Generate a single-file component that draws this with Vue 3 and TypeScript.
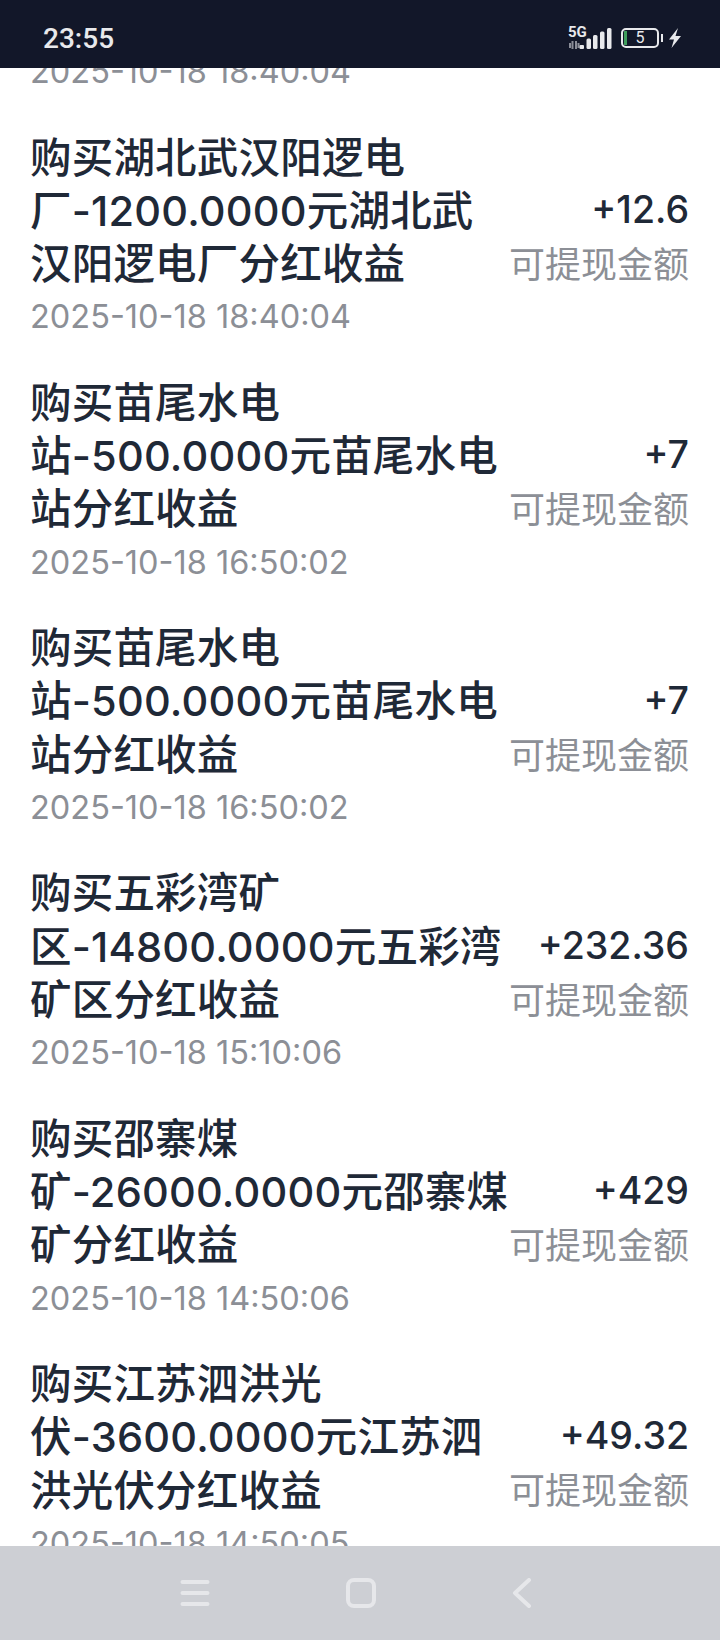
<template>
  <div class="phone">
    <header class="status-bar">
      <span class="clock">23:55</span>
      <div class="status-icons">
        <svg class="network" width="46" height="24" viewBox="0 0 46 24">
          <text x="1" y="11" class="net-label">5G</text>
          <path d="M3 17v5M5.500 15v8M9 15v8M11.500 17v5" class="net-arrows" />
          <rect x="12.500" y="19" width="4.500" height="4" rx="1" class="bar" />
          <rect x="19.500" y="12.500" width="4.500" height="10.500" rx="1.500" class="bar" />
          <rect x="26" y="9" width="4.500" height="14" rx="1.500" class="bar" />
          <rect x="33" y="5.500" width="4.500" height="17.500" rx="1.500" class="bar" />
          <rect x="40" y="2" width="4.500" height="21" rx="1.500" class="bar" />
        </svg>
        <div class="battery">
          <span class="battery-level"></span>
          <span class="battery-num">5</span>
        </div>
        <span class="battery-nub"></span>
        <svg class="bolt" width="14" height="20" viewBox="0 0 14 20">
          <path d="M10 0 1 11.500h5L3.500 20 13 8H7.500z" fill="#e8e9ec" />
        </svg>
      </div>
    </header>

    <main class="viewport">
      <ul class="record-list">
        <li v-for="(item, i) in records" :key="i" class="record">
          <div class="record-main">
            <p class="record-title">
              <span v-for="line in item.lines" :key="line" class="title-line">{{ line }}</span>
            </p>
            <p class="record-time">{{ item.time }}</p>
          </div>
          <div class="record-side">
            <span class="record-amount">{{ item.amount }}</span>
            <span class="record-type">可提现金额</span>
          </div>
        </li>
      </ul>
    </main>

    <footer class="nav-bar">
      <svg width="30" height="28" viewBox="0 0 30 28">
        <path d="M2.500 3h25M2.500 14h25M2.500 25h25" class="nav-icon" />
      </svg>
      <svg width="30" height="30" viewBox="0 0 30 30">
        <rect x="2" y="2" width="26" height="26" rx="6" class="nav-icon" />
      </svg>
      <svg width="20" height="30" viewBox="0 0 20 30">
        <path d="M17 2 3 15l14 13" class="nav-icon" />
      </svg>
    </footer>
  </div>
</template>

<script setup lang="ts">
interface RecordItem {
  lines: string[];
  time: string;
  amount: string;
}

const records: RecordItem[] = [
  {
    lines: ['购买湖北武汉阳逻电', '厂-1200.0000元湖北武', '汉阳逻电厂分红收益'],
    time: '2025-10-18 18:40:04',
    amount: '+12.6',
  },
  {
    lines: ['购买湖北武汉阳逻电', '厂-1200.0000元湖北武', '汉阳逻电厂分红收益'],
    time: '2025-10-18 18:40:04',
    amount: '+12.6',
  },
  {
    lines: ['购买苗尾水电', '站-500.0000元苗尾水电', '站分红收益'],
    time: '2025-10-18 16:50:02',
    amount: '+7',
  },
  {
    lines: ['购买苗尾水电', '站-500.0000元苗尾水电', '站分红收益'],
    time: '2025-10-18 16:50:02',
    amount: '+7',
  },
  {
    lines: ['购买五彩湾矿', '区-14800.0000元五彩湾', '矿区分红收益'],
    time: '2025-10-18 15:10:06',
    amount: '+232.36',
  },
  {
    lines: ['购买邵寨煤', '矿-26000.0000元邵寨煤', '矿分红收益'],
    time: '2025-10-18 14:50:06',
    amount: '+429',
  },
  {
    lines: ['购买江苏泗洪光', '伏-3600.0000元江苏泗', '洪光伏分红收益'],
    time: '2025-10-18 14:50:05',
    amount: '+49.32',
  },
];
</script>

<style>
html,
body {
  margin: 0;
  background: #fff;
}
</style>

<style scoped>
.phone {
  width: 720px;
  height: 1640px;
  display: flex;
  flex-direction: column;
  overflow: hidden;
  font-family: Inter, "Noto Sans CJK SC", sans-serif;
}

.status-bar {
  height: 68px;
  flex: none;
  box-sizing: border-box;
  display: flex;
  align-items: center;
  justify-content: space-between;
  padding: 8px 38px 0 43px;
  background: #121729;
  color: #e8e9ec;
}

.clock {
  font-family: Roboto, sans-serif;
  font-size: 28px;
  font-weight: 500;
}

.status-icons {
  display: flex;
  align-items: center;
}

.network {
  margin-right: 8px;
}

.net-label {
  font-family: Roboto, sans-serif;
  font-size: 15px;
  font-weight: 700;
  fill: #e8e9ec;
}

.net-arrows {
  stroke: #8a8d98;
  stroke-width: 2;
  fill: none;
}

.bar {
  fill: #e8e9ec;
}

.battery {
  width: 38px;
  height: 20px;
  box-sizing: border-box;
  border: 2px solid #e8e9ec;
  border-radius: 5px;
  display: flex;
  align-items: center;
  justify-content: center;
  position: relative;
}

.battery-level {
  position: absolute;
  left: 1px;
  top: 1px;
  bottom: 1px;
  width: 3px;
  background: #3f9d5c;
}

.battery-num {
  font-family: Roboto, sans-serif;
  font-size: 16px;
  line-height: 1;
}

.battery-nub {
  width: 2px;
  height: 8px;
  margin: 0 5px 0 2px;
  background: #e8e9ec;
}

.viewport {
  flex: 1;
  min-height: 0;
  overflow: hidden;
}

.record-list {
  list-style: none;
  margin: -200px 0 0;
  padding: 0;
}

.record {
  height: 245.300px;
  box-sizing: border-box;
  padding: 0 31px 0 30px;
  display: flex;
  align-items: center;
  justify-content: space-between;
}

.record-title {
  margin: 0;
  font-size: 41.500px;
  font-weight: 500;
  line-height: 53.300px;
  letter-spacing: 0.200px;
  color: #1f2937;
}

.title-line {
  display: block;
  white-space: nowrap;
}

.record-time {
  margin: 3px 0 0;
  font-size: 32.500px;
  line-height: 46px;
  color: #8c8f96;
}

.record-side {
  display: flex;
  flex-direction: column;
  align-items: flex-end;
  gap: 7px;
  margin-top: 3px;
  white-space: nowrap;
}

.record-amount {
  font-size: 37.500px;
  font-weight: 500;
  line-height: 48px;
  color: #1f2937;
}

.record-type {
  font-size: 36px;
  line-height: 48px;
  color: #8c8f96;
}

.nav-bar {
  height: 94px;
  flex: none;
  box-sizing: border-box;
  padding-right: 8px;
  display: flex;
  align-items: center;
  justify-content: center;
  gap: 136px;
  background: #cdcfd4;
}

.nav-icon {
  fill: none;
  stroke: #e6e7ea;
  stroke-width: 4;
  stroke-linecap: round;
  stroke-linejoin: round;
}
</style>
